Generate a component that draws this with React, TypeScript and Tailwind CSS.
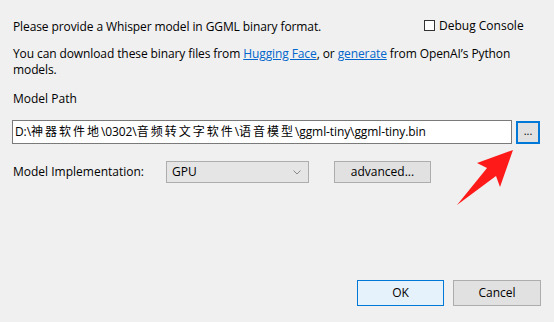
import React from "react";

const Cjk = ({ children }: { children: React.ReactNode }) => (
  <span className="tracking-[2px]">{children}</span>
);

export default function App() {
  return (
    <div
      className="relative w-[554px] h-[322px] bg-[#f0f0f0] text-[12px] text-black overflow-hidden"
      style={{ fontFamily: '"Open Sans", "Noto Sans CJK SC", sans-serif' }}
    >
      <div className="flex flex-col pl-[13px] pt-[18px]">
        <div className="flex items-center h-[18px]">
          <div className="w-[411px] tracking-[-0.1px]">Please provide a Whisper model in GGML binary format.</div>
          <div className="flex items-center gap-[4px] -mt-[3px]">
            <div className="w-[11px] h-[11px] border border-[#333] bg-white" />
            <span>Debug Console</span>
          </div>
        </div>
        <div className="mt-[10px] leading-[16px] w-[530px] tracking-[-0.1px]">
          You can download these binary files from{" "}
          <span className="text-[#0066cc] underline">Hugging Face</span>, or{" "}
          <span className="text-[#0066cc] underline">generate</span> from OpenAI’s Python
          <br />
          models.
        </div>
        <div className="mt-[13px] leading-[16px]">Model Path</div>
        <div className="flex items-center mt-[13px] -ml-[1px] gap-[4px]">
          <div className="w-[500px] h-[24px] bg-white border border-[#7a7a7a] flex items-center pl-[2px] text-[12px] whitespace-nowrap overflow-hidden tracking-[-0.1px]">
            D:\<Cjk>神器软件地</Cjk>\0302\<Cjk>音频转文字软件</Cjk>\<Cjk>语音模型</Cjk>\ggml-tiny\ggml-tiny.bin
          </div>
          <div className="w-[24px] h-[23px] border-2 border-[#0078d7] bg-[#e1e1e1] flex items-center justify-center text-[11px] leading-none pb-[3px]">
            ...
          </div>
        </div>
        <div className="flex items-center mt-[17px] h-[22px]">
          <div className="w-[153px]">Model Implementation:</div>
          <div className="w-[143px] h-[22px] border border-[#adadad] bg-[#e5e5e5] flex items-center justify-between pl-[5px] pr-[7px]">
            <span>GPU</span>
            <svg width="8" height="5" viewBox="0 0 8 5">
              <path d="M0.5 0.5 L4 4 L7.5 0.5" fill="none" stroke="#888" strokeWidth="1" />
            </svg>
          </div>
          <div className="ml-[25px] w-[97px] h-[22px] border border-[#adadad] bg-[#e1e1e1] flex items-center justify-center">
            advanced...
          </div>
        </div>
      </div>
      <div className="absolute left-[357px] top-[280px] flex gap-[9px]">
        <div className="w-[87px] h-[26px] border border-[#0078d7] bg-[#e5f1fb] flex items-center justify-center">
          OK
        </div>
        <div className="w-[88px] h-[26px] border border-[#adadad] bg-[#e1e1e1] flex items-center justify-center">
          Cancel
        </div>
      </div>
      <svg className="absolute left-0 top-0" width="554" height="322" viewBox="0 0 554 322">
        <polygon
          points="513,150 477,163 487,168 457,205 496,176 500,187"
          fill="#ff1a1a"
        />
      </svg>
    </div>
  );
}
